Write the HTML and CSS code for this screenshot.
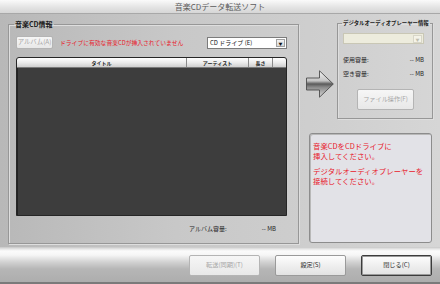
FILE: index.html
```html
<!DOCTYPE html>
<html lang="ja">
<head>
<meta charset="utf-8">
<title>音楽CDデータ転送ソフト</title>
<link rel="stylesheet" href="styles.css">
</head>
<body>
<div class="window">
  <div class="titlebar">音楽CDデータ転送ソフト</div>
  <div class="main">
    <fieldset class="group cd-group">
      <legend>音楽CD情報</legend>
      <div class="cd-row">
        <button class="btn disabled album">アルバム(A)</button>
        <span class="warn">ドライブに有効な音楽CDが挿入されていません</span>
        <div class="combo drive"><span class="combo-text">CD ドライブ (E)</span><span class="drop">▼</span></div>
      </div>
      <div class="list">
        <div class="list-head">
          <span class="col c-title">タイトル</span>
          <span class="col c-artist">アーティスト</span>
          <span class="col c-len">長さ</span>
          <span class="col c-rest"></span>
        </div>
        <div class="list-body"></div>
      </div>
      <div class="capacity"><span>アルバム容量:</span><span class="cap-val">-- MB</span></div>
    </fieldset>
    <div class="side">
      <div class="side-top">
        <svg class="arrow" viewBox="0 0 28 28" width="28" height="28">
          <defs>
            <linearGradient id="ag" x1="0" y1="0" x2="0" y2="1">
              <stop offset="0" stop-color="#f4f4f4"/>
              <stop offset="0.38" stop-color="#c4c4c4"/>
              <stop offset="0.5" stop-color="#5a5a5a"/>
              <stop offset="0.62" stop-color="#8a8a8a"/>
              <stop offset="1" stop-color="#d8d8d8"/>
            </linearGradient>
          </defs>
          <path d="M0.5 8 H13.5 V0.8 L27.3 14 L13.5 27.2 V20 H0.5 Z" fill="url(#ag)" stroke="#4c4c4c" stroke-width="0.9" stroke-linejoin="round"/>
        </svg>
        <fieldset class="group player-group">
          <legend>デジタルオーディオプレーヤー情報</legend>
          <div class="combo player"><span class="combo-text"></span><span class="drop light">▼</span></div>
          <div class="stat first"><span>使用容量:</span><span>-- MB</span></div>
          <div class="stat"><span>空き容量:</span><span>-- MB</span></div>
          <button class="btn disabled file">ファイル操作(F)</button>
        </fieldset>
      </div>
      <div class="message">
        <p>音楽CDをCDドライブに<br>挿入してください。</p>
        <p>デジタルオーディオプレーヤーを<br>接続してください。</p>
      </div>
    </div>
  </div>
  <div class="footer">
    <button class="btn disabled fbtn">転送(同期)(T)</button>
    <button class="btn fbtn">設定(S)</button>
    <button class="btn fbtn default">閉じる(C)</button>
  </div>
</div>
</body>
</html>
```

FILE: styles.css
```css
* { box-sizing: border-box; }
body {
  margin: 0;
  font-family: "Noto Sans CJK JP", "Noto Sans", sans-serif;
}
.window {
  width: 440px;
  height: 284px;
  display: flex;
  flex-direction: column;
  overflow: hidden;
  background: #c4c4c4;
}
.titlebar {
  height: 14px;
  flex: none;
  text-align: center;
  font-size: 8px;
  line-height: 14px;
  color: #5c5c5c;
  background: linear-gradient(#fafafa, #e2e2e2 60%, #d6d6d6);
  border-bottom: 1px solid #a8a8a8;
}
.main {
  flex: 1;
  display: flex;
  align-items: flex-start;
  background: linear-gradient(to right, #b8b8b8, #c8c8c8 40%, #cfcfcf 75%, #d6d6d6);
}
.group {
  margin: 0;
  border: 1px solid #979797;
  box-shadow: inset 1px 1px 0 #dedede, 1px 1px 0 #dedede;
  min-width: 0;
}
.group legend {
  font-weight: bold;
  color: #1a1a1a;
  padding: 0 1px;
}
.cd-group {
  margin: 6px 0 0 8px;
  width: 291px;
  height: 224px;
  padding: 8px 11px 0 7px;
}
.cd-group legend {
  font-size: 7px;
  line-height: 8px;
  margin-left: -2px;
}
.cd-row {
  display: flex;
  align-items: center;
  height: 13px;
}
.btn {
  font-family: inherit;
  margin: 0;
  padding: 0;
  border: 1px solid #9a9a9a;
  border-radius: 2px;
  background: linear-gradient(#fdfdfd, #efefef 50%, #e2e2e2);
  color: #2a2a2a;
  font-size: 6px;
  line-height: 1;
}
.btn.disabled {
  color: #a6a6a6;
  border-color: #b4b4b4;
  background: linear-gradient(#f6f6f6, #e8e8e8);
}
.album {
  width: 37px;
  height: 13px;
  font-size: 6.4px;
}
.warn {
  margin-left: 7px;
  color: #e8202c;
  font-size: 5.8px;
  line-height: 8px;
  white-space: nowrap;
}
.combo {
  display: flex;
  align-items: center;
  background: #fff;
  border: 1px solid #7c7c7c;
}
.combo-text {
  flex: 1;
  font-size: 6px;
  padding-left: 2px;
  color: #111;
  white-space: nowrap;
}
.drop {
  width: 9px;
  height: 8px;
  margin-right: 1px;
  font-size: 4px;
  line-height: 8px;
  text-align: center;
  color: #111;
  background: linear-gradient(#f4f4f4, #d8d8d8);
  border: 1px solid #a0a0a0;
}
.drop.light {
  color: #c0bfb0;
  background: #f4f3e8;
  border-color: #d8d6c8;
}
.drive {
  margin-left: auto;
  width: 80px;
  height: 12px;
}
.list {
  margin-top: 8px;
  height: 159px;
  background: #3d3d3d;
  border: 1px solid #262626;
  border-radius: 3px 3px 0 0;
  box-shadow: inset 1px 0 0 #222;
  display: flex;
  flex-direction: column;
  overflow: hidden;
}
.list-head {
  display: flex;
  height: 10px;
  flex: none;
  background: linear-gradient(#ffffff, #ececec 50%, #cfcfcf);
  border-bottom: 1px solid #7a7a7a;
}
.col {
  font-size: 5px;
  font-weight: bold;
  line-height: 9px;
  text-align: center;
  color: #222;
  border-right: 1px solid #8a8a8a;
  white-space: nowrap;
}
.c-title { width: 170px; }
.c-artist { width: 62px; }
.c-len { width: 24px; }
.c-rest { flex: 1; border-right: none; }
.capacity {
  display: flex;
  justify-content: flex-end;
  margin-top: 9px;
  font-size: 6px;
  line-height: 8px;
  color: #1e1e1e;
  padding-right: 11px;
}
.cap-val { margin-left: 35px; }
.side {
  width: 141px;
  display: flex;
  flex-direction: column;
}
.side-top {
  display: flex;
  margin-top: 6px;
}
.arrow {
  flex: none;
  margin: 50px 0 0 7px;
}
.player-group {
  margin-left: 3px;
  width: 96px;
  height: 99px;
  padding: 6px 5px 0 5px;
}
.player-group legend {
  font-size: 5.4px;
  line-height: 7px;
  margin-left: -1px;
  white-space: nowrap;
}
.player {
  width: 81px;
  height: 11px;
  background: #edecdd;
  border-color: #c9c7b5;
}
.stat {
  display: flex;
  justify-content: space-between;
  width: 81px;
  font-size: 6px;
  line-height: 8px;
  color: #1e1e1e;
  margin-top: 6px;
}
.stat.first { margin-top: 12px; }
.file {
  display: block;
  width: 57px;
  height: 21px;
  margin: 11px 0 0 14px;
  font-size: 6.2px;
}
.message {
  margin: 14px 0 0 10px;
  width: 123px;
  height: 110px;
  background: #e2e2e7;
  border: 1px solid #8c8c8c;
  border-radius: 3px;
  box-shadow: inset 1px 1px 0 #b8b8b8;
  padding: 7px 3px;
  color: #e8202c;
  font-size: 7.4px;
  line-height: 9.5px;
}
.message p { margin: 0; white-space: nowrap; }
.message p + p { margin-top: 6px; }
.footer {
  height: 37px;
  flex: none;
  display: flex;
  justify-content: flex-end;
  align-items: flex-start;
  gap: 15px;
  padding: 8px 8px 0 0;
  background: linear-gradient(#c6c6c6 0, #e6e6e6 2px, #fbfbfb 4px, #f6f6f6 8px, #d2d2d2 15px, #b6b6b6 22px, #adadad 100%);
  border-bottom: 2px solid #7a7a7a;
}
.fbtn {
  width: 71px;
  height: 21px;
  font-size: 6.2px;
}
.fbtn.default {
  border: 1px solid #3c3c3c;
  box-shadow: inset 0 0 0 1px #9a9a9a;
}
```
